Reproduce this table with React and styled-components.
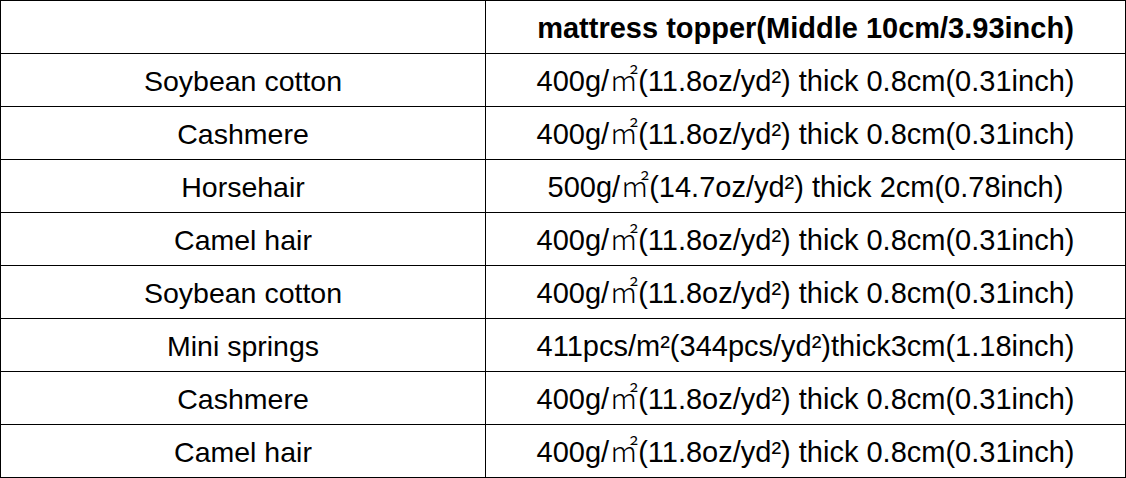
import React from 'react'
import styled, { createGlobalStyle } from 'styled-components';

const GlobalStyle = createGlobalStyle`
    html, body {
        margin: 0;
        padding: 0;
        background: #ffffff;
    }
`;

const Table = styled.table`
    width: 1126px;
    border-collapse: collapse;
    table-layout: fixed;
    font-family: "Liberation Sans", Arial, sans-serif;
    color: #000000;
`;

const Cell = styled.td`
    height: 50px;
    padding: 2px 0 0 0;
    border: 1.5px solid #000000;
    text-align: center;
    vertical-align: middle;
    white-space: nowrap;
    font-size: ${p => (p.$wide ? '29px' : '28.5px')};
    font-weight: ${p => (p.$head ? 700 : 400)};
`;

const Unit = styled.span`
    font-family: "Noto Sans CJK SC", "Noto Sans CJK JP", sans-serif;
    font-weight: 300;
    line-height: 0;
`;

const rows = [
    ['Soybean cotton', '400g/', '(11.8oz/yd²) thick 0.8cm(0.31inch)'],
    ['Cashmere', '400g/', '(11.8oz/yd²) thick 0.8cm(0.31inch)'],
    ['Horsehair', '500g/', '(14.7oz/yd²) thick 2cm(0.78inch)'],
    ['Camel hair', '400g/', '(11.8oz/yd²) thick 0.8cm(0.31inch)'],
    ['Soybean cotton', '400g/', '(11.8oz/yd²) thick 0.8cm(0.31inch)'],
    ['Mini springs', '411pcs/m²(344pcs/yd²)thick3cm(1.18inch)'],
    ['Cashmere', '400g/', '(11.8oz/yd²) thick 0.8cm(0.31inch)'],
    ['Camel hair', '400g/', '(11.8oz/yd²) thick 0.8cm(0.31inch)'],
];

const App = () => {
    return (
        <>
            <GlobalStyle />
            <Table>
                <colgroup>
                    <col style={{ width: 485 }} />
                    <col />
                </colgroup>
                <tbody>
                    <tr>
                        <Cell />
                        <Cell $wide $head>mattress topper(Middle 10cm/3.93inch)</Cell>
                    </tr>
                    {rows.map(([layer, before, after], i) => (
                        <tr key={i}>
                            <Cell>{layer}</Cell>
                            <Cell $wide>
                                {before}
                                {after !== undefined && <Unit>㎡</Unit>}
                                {after}
                            </Cell>
                        </tr>
                    ))}
                </tbody>
            </Table>
        </>
    )
}

export default App
